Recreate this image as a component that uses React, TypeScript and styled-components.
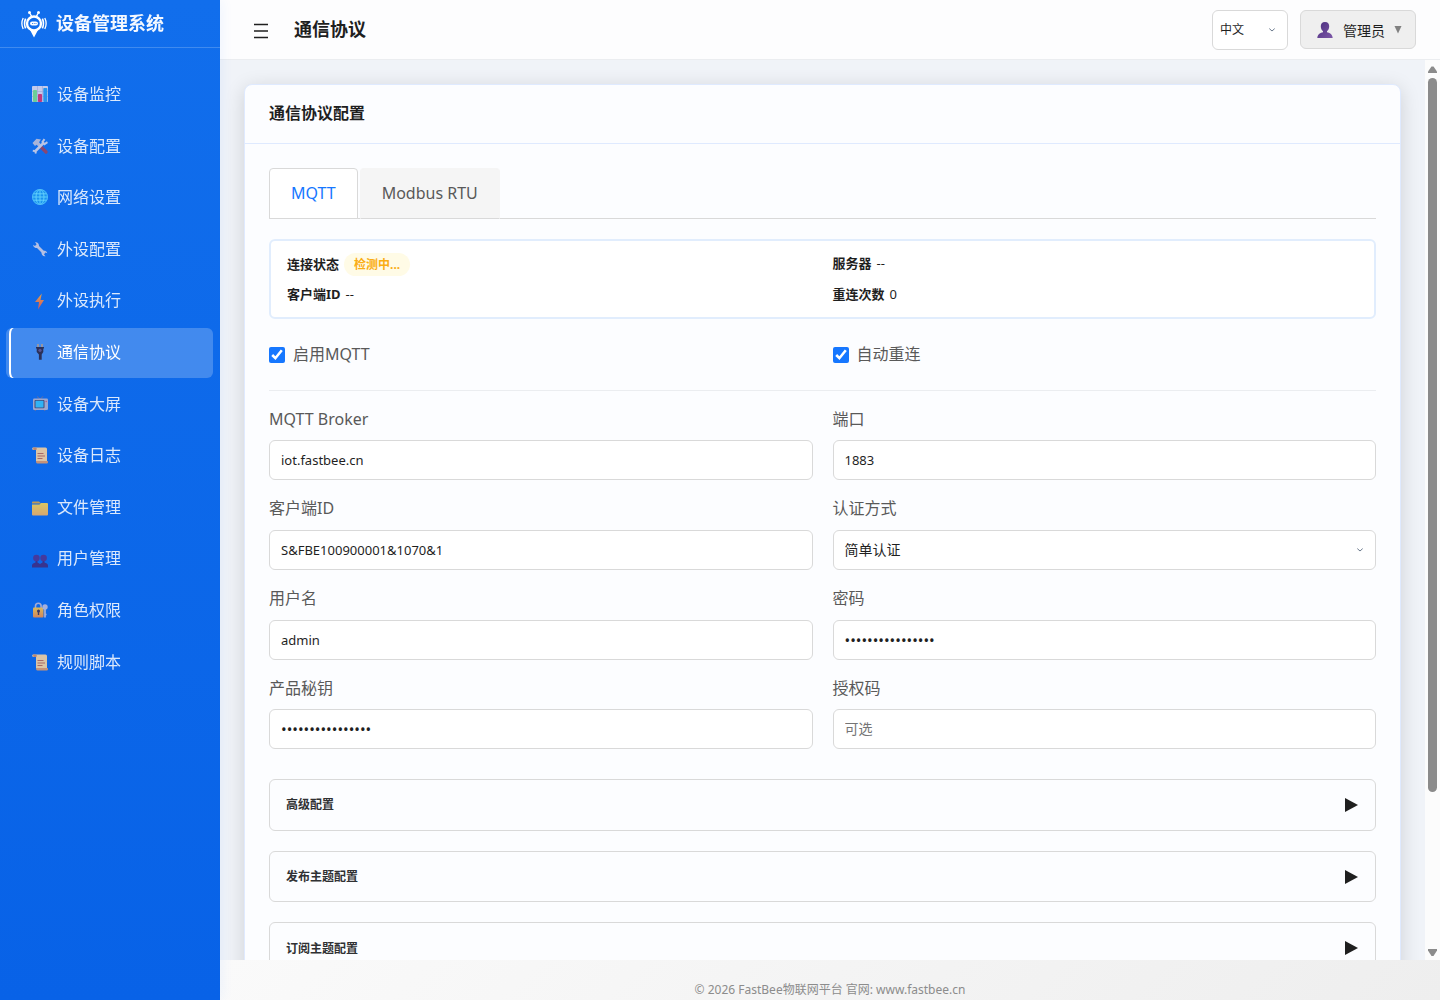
import React, { useState } from "react";
import styled, { createGlobalStyle, css } from "styled-components";

const GlobalStyle = createGlobalStyle`
  *, *::before, *::after { box-sizing: border-box; }
  body {
    margin: 0;
    font-family: "Noto Sans", "Noto Sans CJK SC", sans-serif;
    font-size: 16px;
    line-height: 1.6;
    color: #1f1f1f;
    background: #f0f3f8;
  }
  button, input, select { font-family: inherit; }
  h1, h2, p, ul { margin: 0; padding: 0; }
`;

const Shell = styled.div`
  display: flex;
  height: 100vh;
  overflow: hidden;
`;

const Sidebar = styled.aside`
  flex: 0 0 220px;
  z-index: 1;
  background: linear-gradient(180deg, #116eec 0%, #0862e7 100%);
  box-shadow: 2px 0 12px rgba(22, 104, 255, 0.06);
`;

const Brand = styled.div`
  display: flex;
  align-items: center;
  gap: 8px;
  height: 48px;
  padding: 0 20px;
  border-bottom: 1px solid rgba(255, 255, 255, 0.2);
  color: #f4f8ff;
  font-size: 18px;
  font-weight: 700;
`;

const Nav = styled.nav`
  padding: 22px 7px 0 6px;
`;

const NavList = styled.ul`
  display: flex;
  flex-direction: column;
  gap: 2px;
  list-style: none;
`;

const NavLink = styled.a<{ $active: boolean }>`
  display: flex;
  align-items: center;
  gap: 9px;
  padding: 12px 23px;
  border-left: 3px solid transparent;
  border-radius: 6px;
  color: rgba(255, 255, 255, 0.85);
  text-decoration: none;
  ${(p) =>
    p.$active &&
    css`
      color: #fff;
      background: rgba(255, 255, 255, 0.22);
      box-shadow: inset 2px 0 0 #fff;
    `}
  svg { opacity: 0.85; }
`;

const Main = styled.div`
  flex: 1;
  min-width: 0;
  display: flex;
  flex-direction: column;
`;

const TopBar = styled.header`
  display: flex;
  align-items: center;
  flex: 0 0 60px;
  padding: 0 24px 0 32px;
  background: #fdfdfe;
  border-bottom: 1px solid #ebedf0;
`;

const MenuButton = styled.button`
  display: flex;
  padding: 0;
  border: 0;
  background: none;
  color: #1f1f1f;
`;

const PageTitle = styled.h1`
  flex: 1;
  margin-left: 24px;
  font-size: 18px;
  font-weight: 700;
`;

const SelectBox = styled.div<{ $compact?: boolean }>`
  position: relative;
  width: ${(p) => (p.$compact ? "76px" : "100%")};
  svg {
    position: absolute;
    top: 16px;
    right: 12px;
    pointer-events: none;
  }
`;

const controlStyle = css`
  display: block;
  width: 100%;
  height: 40px;
  padding: 0 11px;
  border: 1px solid #d9d9d9;
  border-radius: 6px;
  background: #fff;
  color: #1f1f1f;
  font-size: 13px;
  outline: none;
`;

const Select = styled.select<{ $compact?: boolean }>`
  ${controlStyle}
  appearance: none;
  font-size: ${(p) => (p.$compact ? "12px" : "14px")};
  padding: ${(p) => (p.$compact ? "0 7px" : "0 11px")};
`;

const Input = styled.input`
  ${controlStyle}
  &[type="password"] { font-size: 15px; }
  &::placeholder { color: #757575; font-size: 14px; }
`;

const UserButton = styled.button`
  display: flex;
  align-items: center;
  gap: 9px;
  height: 39px;
  margin-left: 12px;
  padding: 0 13px 0 15px;
  border: 1px solid #d9d9d9;
  border-radius: 6px;
  background: #efefef;
  color: #1f1f1f;
  font-size: 14px;
`;

const Viewport = styled.div`
  flex: 1;
  min-height: 0;
  display: flex;
`;

const Content = styled.main`
  flex: 1;
  min-width: 0;
  overflow-x: hidden;
  overflow-y: auto;
  scrollbar-width: none;
  padding: 24px;
  background: #f0f3f8;
`;

const Scrollbar = styled.div`
  flex: 0 0 15px;
  display: flex;
  flex-direction: column;
  align-items: center;
  gap: 5px;
  padding: 5px 0 3px;
  background: #fcfcfc;
`;

const Track = styled.div`
  flex: 1;
  width: 9px;
`;

const Thumb = styled.div`
  height: 82.5%;
  border-radius: 5px;
  background: #8b8b8b;
`;

const Card = styled.section`
  border: 1px solid #dfeaff;
  border-radius: 8px;
  background: #fcfdff;
  box-shadow: 0 4px 20px rgba(0, 0, 0, 0.14);
`;

const CardHeader = styled.div`
  padding: 16px 24px;
  border-bottom: 1px solid #dfeaff;
`;

const CardTitle = styled.h2`
  font-size: 16px;
  font-weight: 600;
`;

const CardBody = styled.div`
  padding: 24px;
`;

const Tabs = styled.div`
  display: flex;
  gap: 2px;
  border-bottom: 1px solid #d9d9d9;
`;

const Tab = styled.button<{ $active: boolean }>`
  margin-bottom: -1px;
  padding: 12px 21px;
  border: 1px solid ${(p) => (p.$active ? "#d9d9d9" : "#f5f5f5")};
  border-bottom-color: #d9d9d9;
  border-radius: 4px 4px 0 0;
  background: ${(p) => (p.$active ? "#fff" : "#f5f5f5")};
  color: ${(p) => (p.$active ? "#1677ff" : "#595959")};
  font-size: 16px;
  line-height: inherit;
`;

const columns = css`
  display: grid;
  grid-template-columns: 1fr 1fr;
  column-gap: 20px;
`;

const StatusPanel = styled.div`
  ${columns}
  row-gap: 8px;
  align-items: start;
  margin-top: 20px;
  padding: 12px 16px;
  border: 2px solid #e1edfd;
  border-radius: 6px;
  background: #fff;
  font-size: 13px;
  line-height: 21px;
`;

const StatusItem = styled.div`
  display: flex;
  align-items: center;
  gap: 5px;
`;

const Badge = styled.span`
  padding: 1px 10px;
  border-radius: 12px;
  background: #fffbe6;
  color: #faad14;
  font-size: 12px;
  font-weight: 700;
`;

const SwitchRow = styled.div`
  ${columns}
  padding: 23px 0 22px;
  border-bottom: 1px solid #ebedf0;
`;

const CheckLabel = styled.label`
  display: flex;
  align-items: center;
  gap: 8px;
  color: #595959;
  input {
    width: 16px;
    height: 16px;
    margin: 0;
    accent-color: #1677ff;
  }
`;

const FormGrid = styled.div`
  ${columns}
  row-gap: 16px;
  padding: 16px 0 30px;
`;

const Field = styled.div`
  display: flex;
  flex-direction: column;
  gap: 8px;
`;

const FieldLabel = styled.label`
  color: #595959;
`;

const Sections = styled.div`
  display: flex;
  flex-direction: column;
  gap: 20px;
`;

const SectionToggle = styled.button`
  display: flex;
  align-items: center;
  justify-content: space-between;
  width: 100%;
  padding: 12px 16px;
  border: 1px solid #d9d9d9;
  border-radius: 6px;
  background: transparent;
  color: #303133;
  font-size: 12px;
  font-weight: 600;
  line-height: inherit;
`;

const ToggleMark = styled.span`
  display: flex;
  align-items: center;
  height: 1.6rem;
`;

const Footer = styled.footer`
  flex: 0 0 40px;
  padding-top: 20px;
  background: linear-gradient(135deg, #fafafa 0%, #eeeeee 100%);
  color: #8c8c8c;
  font-size: 12px;
  line-height: 20px;
  text-align: center;
`;

const Logo = () => (
  <svg width="28" height="28" viewBox="0 0 28 28" fill="none" stroke="#fff" aria-hidden="true">
    <circle cx="14" cy="13.5" r="7" strokeWidth="2.4" />
    <path d="M10 20l4 7.500 4-7.500z" fill="#fff" stroke="none" />
    <path d="M12 7l-2-3.5M16 7l2-3.5" strokeWidth="1.4" />
    <circle cx="9.5" cy="2.6" r="1.5" fill="#fff" stroke="none" />
    <circle cx="18.5" cy="2.6" r="1.5" fill="#fff" stroke="none" />
    <path d="M5.600 8.600c-1.300 3-1.300 6.800 0 9.800M22.400 8.600c1.300 3 1.300 6.800 0 9.800" strokeWidth="1.600" />
    <path d="M3.200 8c-1.600 3.300-1.600 7.700 0 11M24.800 8c1.600 3.300 1.600 7.700 0 11" strokeWidth="1.300" />
    <rect x="10" y="11.400" width="8" height="4.200" rx="2.100" fill="#fff" stroke="none" />
    <path d="M12 13.500h.8M13.800 13.500h.8M15.600 13.500h.8" stroke="#116eec" strokeWidth="1" />
  </svg>
);

const scroll = (
  <>
    <path d="M1 .5h12.500a1.500 1.500 0 0 1 1.500 1.500v12H4V3H1.500A1.300 1.300 0 0 1 1 .5z" fill="#ffd59b" />
    <path d="M1 .5h2.500A1.300 1.300 0 0 1 4 3H1.500z" fill="#d98c5c" />
    <path d="M6 14h9.500c.8 0 .8 2.500-.8 2.500H5.500C4 16.500 4 14.500 4 14z" fill="#e59a66" />
    <path d="M5.500 6.500h6M5.500 9h7.500M5.500 11.500h5" stroke="#c46a52" strokeWidth="1.100" />
  </>
);

const glyphs: Record<string, React.ReactNode> = {
  chart: (
    <>
      <rect width="16" height="16" rx="1" fill="#e3dced" />
      <path d="M0 5.500h16M0 10.500h16M5.500 0v16M10.500 0v16" stroke="#b9b4d8" strokeWidth=".7" />
      <rect x="1" y="4" width="4" height="12" rx=".8" fill="#7be08a" />
      <rect x="6" y="8" width="4" height="8" rx=".8" fill="#e02f6b" />
      <rect x="11.300" y="2" width="4" height="14" rx=".8" fill="#2b9cf0" />
    </>
  ),
  tools: (
    <>
      <path d="M8 8l6 6" stroke="#a0405a" strokeWidth="3.200" strokeLinecap="round" />
      <path d="M.5 5L4.500 .8l4.500.7-2 2.800 3 3L7.500 9.500 4.500 6.800 3 8z" fill="#c2c0d6" />
      <path d="M3.500 13l8-8" stroke="#d8d4e4" strokeWidth="2.500" />
      <path d="M12.500 1.200l-2 2.800 2 2.200 3-2M.8 12.800l2.500.3.600 2.500" stroke="#d8d4e4" strokeWidth="2" fill="none" />
    </>
  ),
  globe: (
    <>
      <circle cx="8" cy="8" r="8" fill="#1d9cf2" />
      <path d="M1 4.800h14M0 8h16M1 11.200h14M8 0v16" stroke="#6fe0ff" strokeWidth="1" />
      <ellipse cx="8" cy="8" rx="4" ry="7.500" fill="none" stroke="#6fe0ff" strokeWidth="1" />
      <circle cx="8" cy="8" r="7.500" fill="none" stroke="#58c8fb" strokeWidth="1" />
    </>
  ),
  wrench: (
    <>
      <path d="M4.500 4.500l7.500 7.500" stroke="#d3cfe2" strokeWidth="2.800" />
      <path d="M4.500 1l-.2 2.700L1.200 4" stroke="none" fill="none" />
      <path d="M3 1.200a3.400 3.400 0 0 1 3.500 5A3.400 3.400 0 0 1 1 3.800l2 1.200 1.600-1.800zM13.500 15.200a3.200 3.200 0 0 1-3.500-4.700 3.200 3.200 0 0 1 5.300 1.700l-2-.6-1.300 1.800z" fill="#d3cfe2" />
    </>
  ),
  bolt: <path d="M9.800 .5L3 9h4l-1 7.500L12 7H8.500z" fill="url(#boltFill)" />,
  plug: (
    <>
      <path d="M6 0v4M10 0v4" stroke="#d8a06a" strokeWidth="1.300" />
      <path d="M4 3h8v1.600h-.7V8L9.700 10.500v5.200H6.900v-5.200L4.700 8V4.600H4z" fill="#28213e" />
      <circle cx="8" cy="6.300" r="1.600" fill="#5c4b86" />
    </>
  ),
  tv: (
    <>
      <path d="M8 3L5 .5M8.500 3L11 .3M4 13l-1 2M12 13l1 2" stroke="#79718f" strokeWidth="1" />
      <rect x="1" y="2.500" width="15" height="11.500" rx="1.300" fill="#b7b1c9" />
      <rect x="2.500" y="4" width="10" height="8.300" rx="1" fill="#4c4668" />
      <rect x="3.500" y="4.800" width="8" height="6.700" rx=".6" fill="#37c0f8" />
      <circle cx="14.200" cy="5.500" r=".8" fill="#d45a7c" />
    </>
  ),
  scroll,
  folder: (
    <>
      <path d="M0 3.500A1 1 0 0 1 1 2.500h6l2 2H0z" fill="#e0a53c" />
      <path d="M0 5.500h7.500L9 4h6a1 1 0 0 1 1 1v10.500a1 1 0 0 1-1 1H1a1 1 0 0 1-1-1z" fill="url(#folderFill)" />
    </>
  ),
  users: (
    <>
      <circle cx="4.400" cy="7" r="3.300" fill="#4f3290" />
      <circle cx="11.600" cy="7" r="3.300" fill="#4f3290" />
      <path d="M0 16.500v-2C0 12.500 2 12 3.500 11.500V10h2v1.500L8 13l2.500-1.500V10h2v1.500c1.500.5 3.500 1 3.500 3v2z" fill="#3f2a80" />
    </>
  ),
  lock: (
    <>
      <path d="M3.500 6V4a2.800 2.800 0 0 1 5.600 0v2" fill="none" stroke="#bdb6d2" strokeWidth="1.600" />
      <rect x="1" y="5.500" width="10.500" height="10" rx="1" fill="url(#lockFill)" />
      <circle cx="6.500" cy="9" r="1.500" fill="#433252" />
      <path d="M6.500 9v4" stroke="#433252" strokeWidth="1.400" />
      <circle cx="13" cy="5" r="2.700" fill="#c2bdd9" />
      <path d="M13 6v9.500M13 12.500h1.500" stroke="#c2bdd9" strokeWidth="1.700" />
    </>
  ),
};

const NavIcon = ({ name }: { name: string }) => (
  <svg width="16" height="17" viewBox="0 0 16 17" aria-hidden="true">
    <defs>
      <linearGradient id="boltFill" x1="0" y1="0" x2="0" y2="1">
        <stop offset="0" stopColor="#ffae35" />
        <stop offset="1" stopColor="#f2504c" />
      </linearGradient>
      <linearGradient id="folderFill" x1="0" y1="0" x2="0" y2="1">
        <stop offset="0" stopColor="#ffd74c" />
        <stop offset="1" stopColor="#f9b25d" />
      </linearGradient>
      <linearGradient id="lockFill" x1="0" y1="0" x2="0" y2="1">
        <stop offset="0" stopColor="#ffc843" />
        <stop offset="1" stopColor="#f48c45" />
      </linearGradient>
    </defs>
    {glyphs[name]}
  </svg>
);

const MenuIcon = () => (
  <svg width="18" height="18" viewBox="0 0 18 18" stroke="currentColor" strokeWidth="1.400" aria-hidden="true">
    <path d="M2 3.500h14M2 10h14M2 16.500h14" />
  </svg>
);

const Chevron = () => (
  <svg width="8" height="8" viewBox="0 0 8 8" fill="none" stroke="#6b7a8d" strokeWidth="1" aria-hidden="true">
    <path d="M1.300 2.600L4 5l2.700-2.400" />
  </svg>
);

const Person = () => (
  <svg width="18" height="18" viewBox="0 0 18 18" aria-hidden="true">
    <defs>
      <linearGradient id="personFill" x1="0" y1="0" x2="1" y2="1">
        <stop offset="0" stopColor="#4b2f7e" />
        <stop offset="1" stopColor="#7d57a8" />
      </linearGradient>
    </defs>
    <path d="M9 1c3 0 4.300 2 4.200 4.300 0 2-.8 4-2.200 5v1c2.500.6 5.300 1.700 5.700 5.700H1.300c.4-4 3.200-5.100 5.700-5.700v-1c-1.400-1-2.200-3-2.200-5C4.700 3 6 1 9 1z" fill="url(#personFill)" />
  </svg>
);

const Triangle = ({ d, color, w, h }: { d: string; color: string; w: number; h: number }) => (
  <svg width={w} height={h} viewBox={`0 0 ${w} ${h}`} fill={color} aria-hidden="true">
    <path d={d} />
  </svg>
);

const navItems = [
  ["chart", "设备监控"],
  ["tools", "设备配置"],
  ["globe", "网络设置"],
  ["wrench", "外设配置"],
  ["bolt", "外设执行"],
  ["plug", "通信协议"],
  ["tv", "设备大屏"],
  ["scroll", "设备日志"],
  ["folder", "文件管理"],
  ["users", "用户管理"],
  ["lock", "角色权限"],
  ["scroll", "规则脚本"],
];

type FieldSpec = { id: string; label: string; type?: string; value?: string; placeholder?: string };

const fields: FieldSpec[] = [
  { id: "broker", label: "MQTT Broker", value: "iot.fastbee.cn" },
  { id: "port", label: "端口", value: "1883" },
  { id: "client", label: "客户端ID", value: "S&FBE100900001&1070&1" },
  { id: "auth", label: "认证方式", type: "select", value: "简单认证" },
  { id: "user", label: "用户名", value: "admin" },
  { id: "password", label: "密码", type: "password", value: "abcdefgh12345678" },
  { id: "secret", label: "产品秘钥", type: "password", value: "abcdefgh12345678" },
  { id: "code", label: "授权码", placeholder: "可选" },
];

const FormField = ({ id, label, type, value, placeholder }: FieldSpec) => (
  <Field>
    <FieldLabel htmlFor={id}>{label}</FieldLabel>
    {type === "select" ? (
      <SelectBox>
        <Select id={id}>
          <option>{value}</option>
        </Select>
        <Chevron />
      </SelectBox>
    ) : (
      <Input id={id} type={type ?? "text"} defaultValue={value} placeholder={placeholder} />
    )}
  </Field>
);

export default function App() {
  const [tab, setTab] = useState("MQTT");
  return (
    <>
      <GlobalStyle />
      <Shell>
        <Sidebar>
          <Brand>
            <Logo />
            设备管理系统
          </Brand>
          <Nav>
            <NavList>
              {navItems.map(([icon, text]) => (
                <li key={text}>
                  <NavLink href="#" $active={text === "通信协议"}>
                    <NavIcon name={icon} />
                    {text}
                  </NavLink>
                </li>
              ))}
            </NavList>
          </Nav>
        </Sidebar>
        <Main>
          <TopBar>
            <MenuButton aria-label="菜单">
              <MenuIcon />
            </MenuButton>
            <PageTitle>通信协议</PageTitle>
            <SelectBox $compact>
              <Select $compact aria-label="语言">
                <option>中文</option>
              </Select>
              <Chevron />
            </SelectBox>
            <UserButton>
              <Person />
              管理员
              <Triangle w={8} h={8} d="M.5 0h7L4 7.500z" color="#808080" />
            </UserButton>
          </TopBar>
          <Viewport>
            <Content>
              <Card>
                <CardHeader>
                  <CardTitle>通信协议配置</CardTitle>
                </CardHeader>
                <CardBody>
                  <Tabs role="tablist">
                    {["MQTT", "Modbus RTU"].map((name) => (
                      <Tab
                        key={name}
                        role="tab"
                        aria-selected={tab === name}
                        $active={tab === name}
                        onClick={() => setTab(name)}
                      >
                        {name}
                      </Tab>
                    ))}
                  </Tabs>
                  <StatusPanel>
                    <StatusItem>
                      <strong>连接状态</strong>
                      <Badge>检测中...</Badge>
                    </StatusItem>
                    <StatusItem>
                      <strong>服务器</strong>
                      <span>--</span>
                    </StatusItem>
                    <StatusItem>
                      <strong>客户端ID</strong>
                      <span>--</span>
                    </StatusItem>
                    <StatusItem>
                      <strong>重连次数</strong>
                      <span>0</span>
                    </StatusItem>
                  </StatusPanel>
                  <SwitchRow>
                    <CheckLabel>
                      <input type="checkbox" defaultChecked />
                      启用MQTT
                    </CheckLabel>
                    <CheckLabel>
                      <input type="checkbox" defaultChecked />
                      自动重连
                    </CheckLabel>
                  </SwitchRow>
                  <FormGrid>
                    {fields.map((f) => (
                      <FormField key={f.id} {...f} />
                    ))}
                  </FormGrid>
                  <Sections>
                    {["高级配置", "发布主题配置", "订阅主题配置"].map((name) => (
                      <SectionToggle key={name} aria-expanded={false}>
                        {name}
                        <ToggleMark>
                          <Triangle w={15} h={14} d="M1 0l13 7-13 7z" color="#1f1f1f" />
                        </ToggleMark>
                      </SectionToggle>
                    ))}
                  </Sections>
                </CardBody>
              </Card>
            </Content>
            <Scrollbar aria-hidden="true">
              <Triangle w={9} h={8} d="M3.500 1.500h2L9 6.500V8H0V6.500z" color="#8b8b8b" />
              <Track>
                <Thumb />
              </Track>
              <Triangle w={9} h={8} d="M0 0h9v1.500L5.500 7h-2L0 1.500z" color="#8b8b8b" />
            </Scrollbar>
          </Viewport>
          <Footer>© 2026 FastBee物联网平台 官网: www.fastbee.cn</Footer>
        </Main>
      </Shell>
    </>
  );
}
